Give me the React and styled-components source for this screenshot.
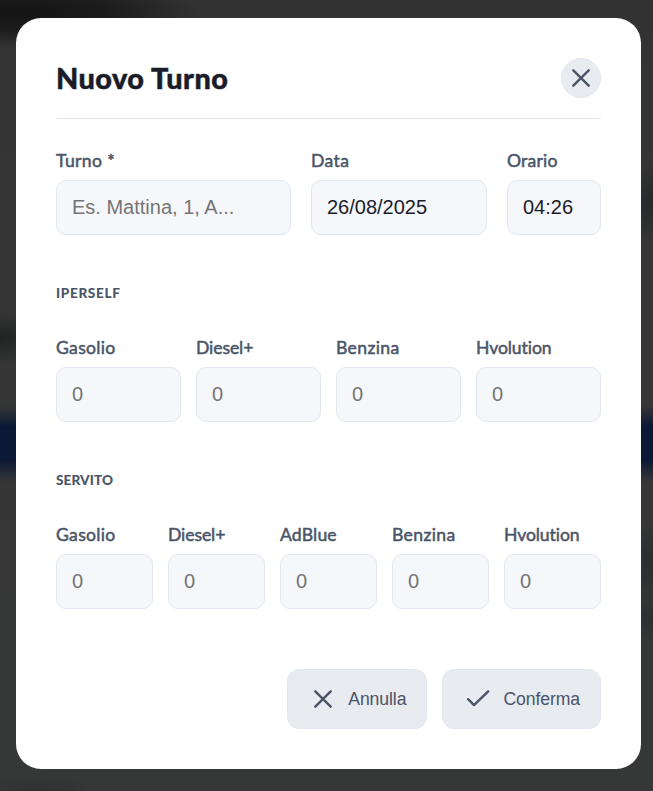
import React from 'react';
import styled, { createGlobalStyle } from 'styled-components';

const GlobalStyle = createGlobalStyle`
  * { box-sizing: border-box; }
  body { margin: 0; background: #333; }
`;

const rounded = `'Lato', 'Open Sans', sans-serif`;
const plain = `'Liberation Sans', Arial, sans-serif`;

const Overlay = styled.div`
  height: 791px;
  padding: 18px 12px 22px 16px;
  overflow: hidden;
  background:
    radial-gradient(ellipse 180px 36px at 20px 12px, rgba(16, 16, 17, 0.9) 0%, rgba(20, 20, 21, 0.7) 50%, transparent 100%),
    radial-gradient(ellipse 60px 14px at 38px 791px, rgba(43, 45, 47, 0.8), transparent),
    radial-gradient(ellipse 60px 28px at 0 338px, rgba(32, 33, 34, 0.9), transparent),
    radial-gradient(ellipse 30px 40px at 653px 203px, rgba(35, 36, 38, 0.8), transparent),
    radial-gradient(ellipse 30px 40px at 653px 562px, rgba(42, 43, 46, 0.9), transparent),
    radial-gradient(ellipse 30px 24px at 653px 618px, rgba(44, 45, 47, 0.9), transparent),
    linear-gradient(to bottom, transparent 406px, #0c1936 426px, #0c1936 460px, transparent 482px),
    linear-gradient(to bottom, #323232, #353635 30%, #363737);
`;

const Dialog = styled.section`
  height: 751px;
  padding: 40px;
  border-radius: 25px;
  background: #fff;
`;

const Header = styled.header`
  display: flex;
  justify-content: space-between;
  height: 61px;
  border-bottom: 1px solid #e2e8f0;
`;

const Title = styled.h2`
  margin: 0;
  font: 900 28.8px/41px ${rounded};
  letter-spacing: 0.5px;
  -webkit-text-stroke: 0.5px currentColor;
  color: #1a1d29;
`;

const CloseButton = styled.button`
  display: flex;
  width: 40px;
  height: 40px;
  padding: 4px;
  border: 1px solid #e2e8f0;
  border-radius: 50%;
  background: #e8ebf0;
  color: #4a5568;
`;

const FieldRow = styled.div`
  display: grid;
  grid-template-columns: ${(p) => p.$columns};
  gap: ${(p) => p.$gap || 15}px;
`;

const MainFields = styled(FieldRow)`
  margin-top: 30px;
`;

const Field = styled.label`
  display: flex;
  flex-direction: column;
  gap: 9px;
  min-width: 0;
`;

const LabelText = styled.span`
  height: 22px;
  font: 400 17.6px/23px ${rounded};
  font-variant-ligatures: none;
  letter-spacing: ${(p) => p.$tracking || 0}px;
  -webkit-text-stroke: 0.5px currentColor;
  white-space: nowrap;
  color: #4a5568;
`;

const Input = styled.input`
  width: 100%;
  height: 55px;
  padding: 0 15px;
  border: 1px solid #e2e8f0;
  border-radius: 10px;
  outline: none;
  background: #f5f7fb;
  font: 20px ${plain};
  color: #1a1d29;
  &::placeholder { color: #757575; opacity: 1; }
`;

const Group = styled.section`
  margin-top: 46px;
`;

const GroupTitle = styled.h3`
  margin: 0 0 31px;
  height: 24px;
  font: 900 13.6px/24px ${rounded};
  letter-spacing: ${(p) => p.$tracking}px;
  text-transform: uppercase;
  color: #4a5568;
`;

const Actions = styled.footer`
  display: flex;
  justify-content: flex-end;
  gap: 15px;
  margin-top: 60px;
`;

const ActionButton = styled.button`
  display: flex;
  align-items: center;
  gap: 10px;
  height: 60px;
  padding: 0 20px;
  border: 1px solid #e2e8f0;
  border-radius: 12px;
  background: #e8ebf0;
  font: 17.6px ${plain};
  letter-spacing: -0.08px;
  color: #4a5568;
`;

const Icon = styled.svg`
  flex: none;
  width: 30px;
  height: 30px;
  fill: none;
  stroke: currentColor;
  stroke-width: 2.4;
  stroke-linecap: round;
  stroke-linejoin: round;
`;

const CrossIcon = () => (
  <Icon viewBox="0 0 30 30"><path d="M7.3 7.3l15.4 15.4M22.7 7.3L7.3 22.7" /></Icon>
);

const CheckIcon = () => (
  <Icon viewBox="0 0 30 30"><path d="M5.1 15.2l5.9 5.9L25.2 7.4" /></Icon>
);

const labelTracking = {
  'Turno *': 0.35,
  Data: 0.4,
  Orario: 0.2,
  Gasolio: 0.3,
  'Diesel+': -0.1,
  AdBlue: 0.15,
  Benzina: 0.35,
  Hvolution: -0.08,
};

const iperself = ['Gasolio', 'Diesel+', 'Benzina', 'Hvolution'];
const servito = ['Gasolio', 'Diesel+', 'AdBlue', 'Benzina', 'Hvolution'];

function TextField({ label, ...input }) {
  return (
    <Field>
      <LabelText $tracking={labelTracking[label]}>{label}</LabelText>
      <Input {...input} />
    </Field>
  );
}

function FuelGroup({ title, tracking, fuels }) {
  return (
    <Group>
      <GroupTitle $tracking={tracking}>{title}</GroupTitle>
      <FieldRow $columns={`repeat(${fuels.length}, 1fr)`}>
        {fuels.map((name) => (
          <TextField key={name} label={name} placeholder="0" />
        ))}
      </FieldRow>
    </Group>
  );
}

export default function App() {
  return (
    <>
      <GlobalStyle />
      <Overlay>
        <Dialog role="dialog" aria-label="Nuovo Turno">
          <Header>
            <Title>Nuovo Turno</Title>
            <CloseButton aria-label="Chiudi"><CrossIcon /></CloseButton>
          </Header>
          <MainFields $columns="235px 176px 94px" $gap={20}>
            <TextField label="Turno *" placeholder="Es. Mattina, 1, A..." />
            <TextField label="Data" defaultValue="26/08/2025" />
            <TextField label="Orario" defaultValue="04:26" />
          </MainFields>
          <FuelGroup title="Iperself" tracking={0.65} fuels={iperself} />
          <FuelGroup title="Servito" tracking={0.1} fuels={servito} />
          <Actions>
            <ActionButton><CrossIcon />Annulla</ActionButton>
            <ActionButton><CheckIcon />Conferma</ActionButton>
          </Actions>
        </Dialog>
      </Overlay>
    </>
  );
}
